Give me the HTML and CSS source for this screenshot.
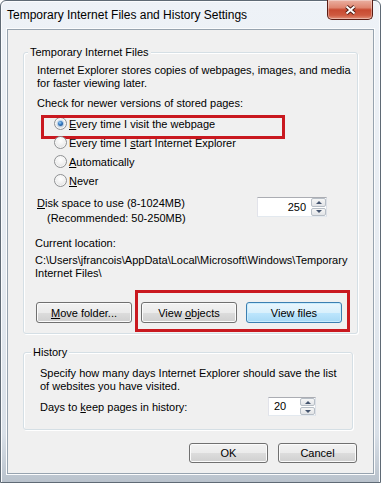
FILE: index.html
```html
<!DOCTYPE html>
<html lang="en">
<head>
  <meta charset="UTF-8" />
  <meta name="viewport" content="width=device-width, initial-scale=1.0"/>
  <title>Temporary Internet Files and History Settings</title>
  <link rel="stylesheet" href="styles.css">
</head>
<body>
  <div class="window">
    <div class="titlebar">
      <span class="title">Temporary Internet Files and History Settings</span>
      <button class="close-btn" title="Close">
        <svg width="13" height="10" viewBox="0 0 13 10">
          <path d="M2.5 1.5 L10.5 8.5 M10.5 1.5 L2.5 8.5" stroke="#4a1a12" stroke-width="3.8"/>
          <path d="M2.5 1.5 L10.5 8.5 M10.5 1.5 L2.5 8.5" stroke="#fff" stroke-width="2"/>
        </svg>
      </button>
    </div>

    <div class="client">
      <div class="group group-files">
        <div class="group-title">Temporary Internet Files</div>
        <p class="text desc">Internet Explorer stores copies of webpages, images, and media<br>for faster viewing later.</p>
        <p class="text check-label">Check for newer versions of stored pages:</p>
        <div class="radios">
          <label class="radio marked"><span class="radio-dot checked"></span><span><u>E</u>very time I visit the webpage</span></label>
          <label class="radio"><span class="radio-dot"></span><span>Every time I <u>s</u>tart Internet Explorer</span></label>
          <label class="radio"><span class="radio-dot"></span><span><u>A</u>utomatically</span></label>
          <label class="radio"><span class="radio-dot"></span><span><u>N</u>ever</span></label>
        </div>
        <div class="disk-row">
          <div class="disk-text"><u>D</u>isk space to use (8-1024MB)<br><span class="indent">(Recommended: 50-250MB)</span></div>
          <div class="spin spin-disk">
            <span class="spin-value">250</span>
            <span class="spin-btns"><span class="spin-up"></span><span class="spin-down"></span></span>
          </div>
        </div>
        <p class="text location-label">Current location:</p>
        <p class="text location-path">C:\Users\jfrancois\AppData\Local\Microsoft\Windows\Temporary<br>Internet Files\</p>
        <div class="btn-row">
          <button class="btn"><u>M</u>ove folder...</button>
          <div class="btn-pair marked-pair">
            <button class="btn">View <u>o</u>bjects</button>
            <button class="btn btn-default">View files</button>
          </div>
        </div>
      </div>

      <div class="group group-history">
        <div class="group-title">History</div>
        <p class="text desc">Specify how many days Internet Explorer should save the list<br>of websites you have visited.</p>
        <div class="days-row">
          <span>Days to <u>k</u>eep pages in history:</span>
          <div class="spin spin-days">
            <span class="spin-value">20</span>
            <span class="spin-btns"><span class="spin-up"></span><span class="spin-down"></span></span>
          </div>
        </div>
      </div>

      <div class="dialog-buttons">
        <button class="btn btn-dialog">OK</button>
        <button class="btn btn-dialog">Cancel</button>
      </div>
    </div>
  </div>
</body>
</html>
```

FILE: styles.css
```css
* {
  box-sizing: border-box;
}
body {
  margin: 0;
  font-family: "Liberation Sans", Arial, sans-serif;
  font-size: 11px;
  color: #000;
  background: #fff;
}

/* window frame */
.window {
  width: 381px;
  height: 483px;
  display: flex;
  flex-direction: column;
  padding: 0 6px 8px 6px;
  border: 1px solid #5f6a75;
  border-radius: 6px 6px 0 0;
  background: linear-gradient(to bottom, #eef2f7 0%, #e6ebf1 55%, #d9e0e8 90%, #b9c2cc 100%);
  box-shadow: inset 1px 1px 0 #fbfcfe, inset -1px 0 0 #fbfcfe;
}
.titlebar {
  height: 28px;
  display: flex;
  justify-content: space-between;
  align-items: flex-start;
}
.title {
  padding-top: 6px;
  font-size: 12px;
  line-height: 16px;
  color: #000;
}
.close-btn {
  width: 46px;
  height: 20px;
  margin-top: -1px;
  margin-right: 1px;
  padding: 0;
  border: 1px solid #5a1c13;
  border-top: none;
  border-radius: 0 0 5px 5px;
  background: linear-gradient(to bottom, #eab0a2 0%, #df8670 40%, #c84a31 52%, #cf5a40 80%, #e2917a 100%);
  box-shadow: inset 0 0 0 1px rgba(255,255,255,0.35);
  display: flex;
  align-items: center;
  justify-content: center;
}
.close-btn svg {
  display: block;
}

/* client area */
.client {
  flex: 1;
  background: #f0f0f0;
  border: 1px solid #97a3af;
  box-shadow: 0 0 0 1px #fbfcfd;
  display: flex;
  flex-direction: column;
}
.text {
  margin: 0;
  line-height: 13px;
  white-space: nowrap;
}
u {
  text-underline-offset: 1px;
}

/* group boxes */
.group {
  border: 1px solid #d5dfe5;
  border-radius: 3px;
  box-shadow: inset 1px 1px 0 #fff, 1px 1px 0 #fff;
}
.group-title {
  width: max-content;
  margin: -7px 0 0 -9px;
  padding: 0 2px;
  line-height: 13px;
  background: #f0f0f0;
}
.group-files {
  margin: 22px 15px 0 15px;
  padding: 0 15px 10px 13px;
}
.group-history {
  margin: 18px 20px 0 15px;
  padding: 0 36px 13px 16px;
}
.group-files .desc {
  margin-top: 5px;
}
.check-label {
  margin-top: 7px;
}

/* radios */
.radios {
  margin-top: 4px;
  padding-left: 17px;
}
.radio {
  position: relative;
  height: 19px;
  display: flex;
  align-items: center;
  gap: 2px;
}
.radio-dot {
  position: relative;
  flex-shrink: 0;
  width: 13px;
  height: 13px;
  border-radius: 50%;
  border: 1px solid #8f9193;
  background: radial-gradient(circle at 50% 35%, #ffffff 0%, #f1f1f1 45%, #d6d6d6 100%);
  box-shadow: inset 0 0 0 1px #f7f7f7;
}
.radio-dot.checked::after {
  content: "";
  position: absolute;
  left: 3px;
  top: 3px;
  width: 5px;
  height: 5px;
  border-radius: 50%;
  background: radial-gradient(circle at 40% 35%, #9fd2f5 0%, #2f76c0 45%, #133f78 100%);
  box-shadow: 0 0 1px 1px rgba(60,130,200,0.35);
}
.marked::after {
  content: "";
  position: absolute;
  left: -13px;
  top: 1px;
  width: 238px;
  height: 18px;
  border: 3px solid #c9181f;
  pointer-events: none;
}

/* spinners */
.disk-row {
  margin-top: 6px;
  display: flex;
  justify-content: space-between;
  align-items: flex-start;
}
.disk-text {
  line-height: 15px;
}
.indent {
  padding-left: 10px;
}
.spin {
  flex-shrink: 0;
  display: flex;
  background: #fff;
  border: 1px solid;
  border-color: #abadb3 #dbdfe6 #e3e9ef #e2e3ea;
}
.spin-disk {
  width: 70px;
  height: 20px;
  margin-top: 1px;
  margin-right: 15px;
}
.spin-days {
  width: 48px;
  height: 19px;
}
.spin-value {
  flex: 1;
  display: flex;
  align-items: center;
  line-height: 13px;
}
.spin-disk .spin-value {
  justify-content: flex-end;
  padding-right: 5px;
}
.spin-days .spin-value {
  padding-left: 5px;
}
.spin-btns {
  width: 15px;
  display: flex;
  flex-direction: column;
  gap: 1px;
}
.spin-up, .spin-down {
  flex: 1;
  display: flex;
  align-items: center;
  justify-content: center;
  border: 1px solid #b7bec6;
  border-radius: 2px;
  background: linear-gradient(to bottom, #f6f6f6, #e2e4e7);
}
.spin-up::before, .spin-down::before {
  content: "";
  border-left: 3px solid transparent;
  border-right: 3px solid transparent;
}
.spin-up::before {
  border-bottom: 3px solid #44546e;
}
.spin-down::before {
  border-top: 3px solid #44546e;
}

.location-label {
  margin: 11px 0 0 -2px;
}
.location-path {
  margin: 4px 0 0 -2px;
}

/* buttons */
.btn-row {
  margin: 22px 0 0 -1px;
  display: flex;
  gap: 9px;
}
.btn-pair {
  position: relative;
  display: flex;
  gap: 9px;
}
.marked-pair::after {
  content: "";
  position: absolute;
  left: -6px;
  right: -8px;
  top: -12px;
  bottom: -9px;
  border: 3px solid #c9181f;
  pointer-events: none;
}
.btn {
  flex-shrink: 0;
  width: 96px;
  height: 21px;
  padding: 0;
  font-family: inherit;
  font-size: 11px;
  color: #000;
  border: 1px solid #707070;
  border-radius: 3px;
  background: linear-gradient(to bottom, #f2f2f2 0%, #ebebeb 50%, #dddddd 50%, #cfcfcf 100%);
  box-shadow: inset 0 0 0 1px #fbfbfb;
}
.btn-default {
  border-color: #3c7fb1;
  background: linear-gradient(to bottom, #eaf6fd 0%, #d9f0fc 50%, #bee6fd 50%, #a7d9f5 100%);
  box-shadow: inset 0 0 0 1px #c9ecfd;
}

.group-history .desc {
  margin-top: 8px;
}
.days-row {
  margin-top: 4px;
  display: flex;
  justify-content: space-between;
  align-items: center;
}

.dialog-buttons {
  margin-top: 13px;
  padding-right: 16px;
  display: flex;
  justify-content: flex-end;
  gap: 10px;
}
.btn-dialog {
  width: 79px;
  height: 20px;
}
```
